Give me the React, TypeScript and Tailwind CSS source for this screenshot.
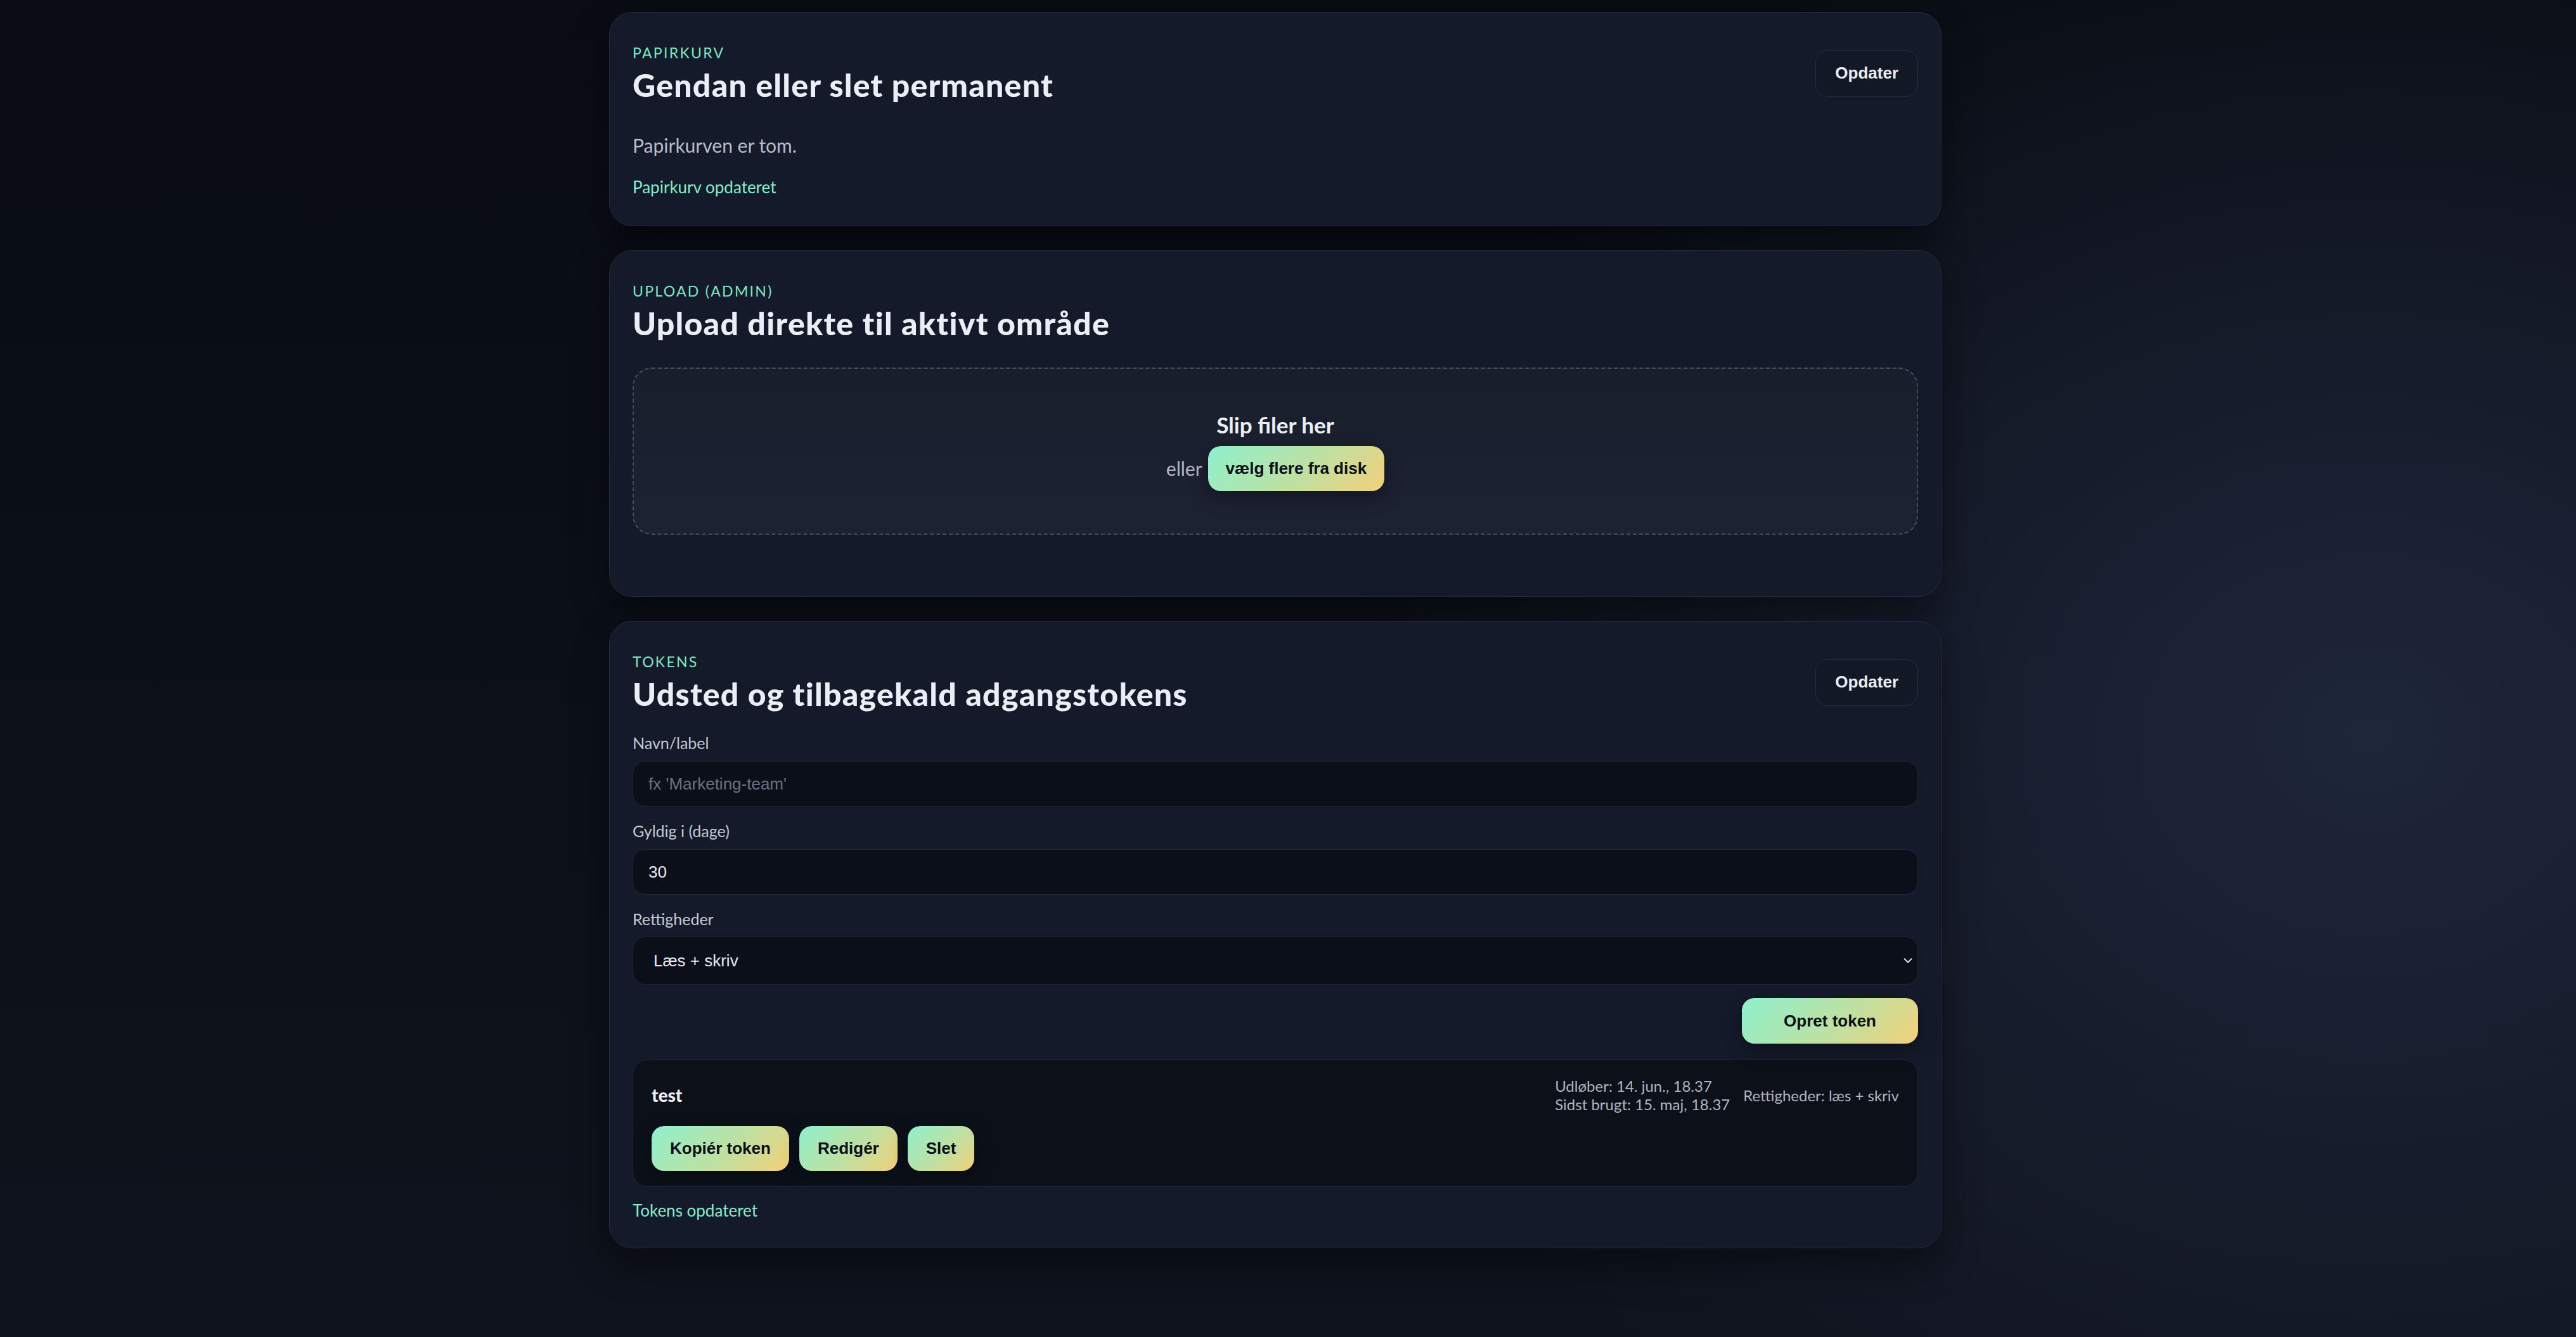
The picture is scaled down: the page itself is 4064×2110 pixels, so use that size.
import { ChevronDown } from "lucide-react";
import type { ReactNode } from "react";

const TEXT_FONT = "font-['Lato','Noto_Sans',sans-serif]";
const UI_FONT = "font-['Liberation_Sans',Arial,sans-serif]";
const GRADIENT_BTN =
  "bg-[linear-gradient(135deg,#8ef0cd_0%,#bfe0a2_55%,#f3d078_100%)] text-[#0b0f18] font-bold shadow-[0_10px_28px_rgba(0,0,0,0.35)]";

interface CardProps {
  eyebrow: string;
  title: string;
  action?: ReactNode;
  className?: string;
  children: ReactNode;
}

function Card({ eyebrow, title, action, className = "", children }: CardProps) {
  return (
    <section
      className={`rounded-[36px] border border-[#232a3a] bg-[#141a29] px-[36px] pt-[49px] shadow-[0_24px_60px_rgba(0,0,0,0.45)] ${className}`}
    >
      <header className="flex items-center justify-between">
        <div>
          <div className="text-[23px] leading-[28px] tracking-[0.1em] uppercase text-[#7fe6c6]">{eyebrow}</div>
          <h2 className="mt-[10px] text-[50px] leading-[55px] font-black tracking-[0.025em] text-[#eceef5]">{title}</h2>
        </div>
        {action}
      </header>
      {children}
    </section>
  );
}

function RefreshButton() {
  return (
    <button
      type="button"
      className={`${UI_FONT} h-[74px] rounded-[20px] border border-[#262d3c] bg-[#121826] px-[30px] text-[26px] font-bold text-[#eceef5]`}
    >
      Opdater
    </button>
  );
}

function Label({ children, className = "" }: { children: ReactNode; className?: string }) {
  return <label className={`block text-[25px] leading-[32px] text-[#c5c8d3] ${className}`}>{children}</label>;
}

const FIELD =
  "block w-full rounded-[20px] border border-[#1f2533] bg-[#0b0f19] text-[26px] text-[#e8eaf0] outline-none";

export default function App() {
  return (
    <div
      className={`${TEXT_FONT} min-h-[2110px] bg-[#0b0e16] bg-[radial-gradient(ellipse_40%_65%_at_92%_55%,#1e263a_0%,rgba(30,38,58,0)_100%),linear-gradient(180deg,#090c13_0%,#0f131d_100%)]`}
    >
      <main className="ml-[961px] flex w-[2102px] flex-col gap-[38px] pt-[19px]">
        <Card eyebrow="Papirkurv" title="Gendan eller slet permanent" action={<RefreshButton />} className="pb-[41px]">
          <p className="mt-[45px] text-[30px] leading-[45px] text-[#b9bdca]">Papirkurven er tom.</p>
          <p className="mt-[24px] text-[26px] leading-[39px] text-[#86ecce]">Papirkurv opdateret</p>
        </Card>

        <Card eyebrow="Upload (admin)" title="Upload direkte til aktivt område" className="pb-[97px]">
          <div className="mt-[42px] flex h-[264px] flex-col items-center justify-center rounded-[30px] border-2 border-dashed border-[#454c5c] bg-[linear-gradient(180deg,#191e2c_0%,#1d2233_100%)]">
            <div className="text-[35px] leading-[40px] font-bold text-[#eceef5]">Slip filer her</div>
            <div className="mt-[14px] flex items-center gap-[9px]">
              <span className="text-[30px] text-[#b3b7c4]">eller</span>
              <button type="button" className={`${UI_FONT} ${GRADIENT_BTN} h-[71px] rounded-[20px] px-[28px] text-[26px]`}>
                vælg flere fra disk
              </button>
            </div>
          </div>
        </Card>

        <Card eyebrow="Tokens" title="Udsted og tilbagekald adgangstokens" action={<RefreshButton />} className="pb-[39px]">
          <Label className="mt-[33px]">Navn/label</Label>
          <input
            className={`${UI_FONT} ${FIELD} mt-[13px] h-[72px] px-[24px] placeholder:text-[#6b7080]`}
            placeholder="fx 'Marketing-team'"
          />
          <Label className="mt-[22px]">Gyldig i (dage)</Label>
          <input className={`${UI_FONT} ${FIELD} mt-[13px] h-[72px] px-[24px]`} defaultValue="30" />
          <Label className="mt-[22px]">Rettigheder</Label>
          <div className="relative mt-[12px]">
            <select className={`${UI_FONT} ${FIELD} h-[76px] appearance-none pl-[32px] pr-[48px]`} defaultValue="rw">
              <option value="r">Læs</option>
              <option value="rw">Læs + skriv</option>
            </select>
            <ChevronDown
              className="pointer-events-none absolute right-[5px] top-1/2 h-[22px] w-[22px] -translate-y-1/2 text-[#e4e6ee]"
              strokeWidth={2}
            />
          </div>
          <div className="mt-[21px] flex justify-end">
            <button type="button" className={`${UI_FONT} ${GRADIENT_BTN} h-[72px] rounded-[20px] px-[66px] text-[26px]`}>
              Opret token
            </button>
          </div>

          <div className="mt-[25px] rounded-[24px] border border-[#1e2432] bg-[#0c1019] px-[29px] pt-[26px] pb-[24px]">
            <div className="flex items-center justify-between">
              <div className="text-[28px] font-black text-[#eef0f6]">test</div>
              <div className="flex items-center gap-[21px] text-[24px] leading-[29px] text-[#b0b4c0]">
                <div>
                  <div>Udløber: 14. jun., 18.37</div>
                  <div>Sidst brugt: 15. maj, 18.37</div>
                </div>
                <div>Rettigheder: læs + skriv</div>
              </div>
            </div>
            <div className="mt-[20px] flex gap-[16px]">
              {["Kopiér token", "Redigér", "Slet"].map((label) => (
                <button
                  key={label}
                  type="button"
                  className={`${UI_FONT} ${GRADIENT_BTN} h-[71px] rounded-[20px] px-[29px] text-[26px]`}
                >
                  {label}
                </button>
              ))}
            </div>
          </div>

          <p className="mt-[18px] text-[26px] leading-[39px] text-[#86ecce]">Tokens opdateret</p>
        </Card>
      </main>
    </div>
  );
}
